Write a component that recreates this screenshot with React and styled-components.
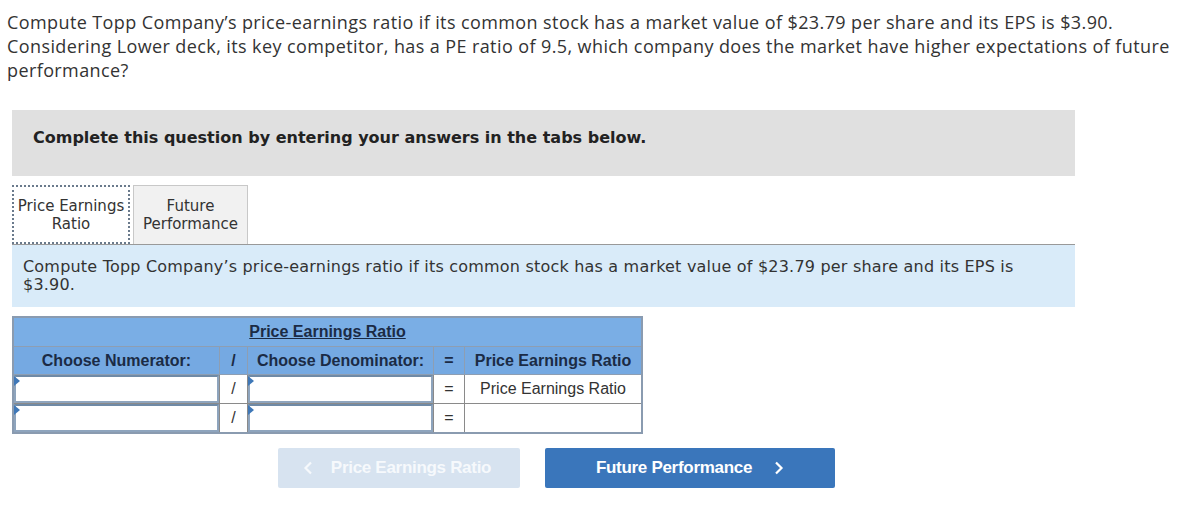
import React from "react";
import styled, { createGlobalStyle } from "styled-components";

const Global = createGlobalStyle`
  html, body { margin: 0; padding: 0; background: #fff; }
`;

const Page = styled.div`
  width: 1180px;
  height: 516px;
  padding: 10px 7px 0 7px;
  box-sizing: border-box;
`;

const Question = styled.p`
  margin: 0;
  font-family: "Open Sans", Lato, sans-serif;
  font-size: 18px;
  line-height: 24px;
  letter-spacing: 0.4px;
  color: #333;
  white-space: nowrap;
`;

const Panel = styled.div`
  margin: 28px 0 0 5px;
  width: 1063px;
`;

const Banner = styled.div`
  height: 66px;
  box-sizing: border-box;
  background: #e0e0e0;
  padding: 18px 0 0 21px;
  line-height: 20px;
  font-family: Verdana, "DejaVu Sans", sans-serif;
  font-weight: bold;
  font-size: 16px;
  color: #222;
`;

const TabBar = styled.div`
  display: flex;
  gap: 3px;
  margin-top: 9px;
  border-bottom: 1px solid #999;
`;

const Tab = styled.div`
  width: ${(p) => p.w}px;
  height: 59px;
  box-sizing: border-box;
  display: flex;
  align-items: center;
  justify-content: center;
  text-align: center;
  font-family: Verdana, "DejaVu Sans", sans-serif;
  font-size: 15px;
  line-height: 18px;
  color: #333;
  background: ${(p) => (p.active ? "#fff" : "#f1f1f1")};
  border: ${(p) => (p.active ? "2px dotted #6a7a8c" : "1px solid #c8c8c8")};
  border-bottom: ${(p) => (p.active ? "2px dotted #6a7a8c" : "none")};
  margin-bottom: ${(p) => (p.active ? "-1px" : "0")};
`;

const Info = styled.div`
  background: #d9ebf9;
  height: 62px;
  box-sizing: border-box;
  padding: 13px 50px 0 11px;
  font-family: Verdana, "DejaVu Sans", sans-serif;
  font-size: 16px;
  letter-spacing: 0.2px;
  line-height: 18px;
  color: #333;
`;

const Table = styled.table`
  margin-top: 9px;
  border-collapse: collapse;
  font-family: Arial, "Liberation Sans", sans-serif;
  font-size: 16px;
  line-height: 18px;
  border: 2px solid #8a9bb0;
`;

const Th = styled.th`
  background: ${(p) => (p.top ? "#7aaee5" : "#75a9e2")};
  color: #1b2b45;
  font-weight: bold;
  height: ${(p) => (p.top ? 28 : 27)}px;
  padding: 0;
  text-align: center;
  border: 1px solid #8e9eb2;
  border-top: ${(p) => (p.top ? "none" : "1px solid #8e9eb2")};
  width: ${(p) => (p.w ? p.w + "px" : "auto")};
  text-decoration: ${(p) => (p.top ? "underline" : "none")};
  white-space: nowrap;
`;

const Td = styled.td`
  height: 27px;
  padding: 0;
  text-align: center;
  border: 1px solid #8a8a8a;
  color: #333;
  background: #fff;
  white-space: nowrap;
`;

const InputTd = styled.td`
  height: 27px;
  padding: 0;
  border: 1px solid #8a8a8a;
  background: #fff;
  position: relative;
`;

const Field = styled.div`
  border: 2px solid #8ea4bd;
  border-top-color: #6f8aa6;
  box-sizing: border-box;
  height: 28px;
  background: #fff;
`;

const Marker = styled.span`
  position: absolute;
  left: 0;
  top: 1px;
  width: 0;
  height: 0;
  border-top: 5px solid transparent;
  border-bottom: 5px solid transparent;
  border-left: 6px solid #3f78b8;
`;

const Nav = styled.div`
  display: flex;
  gap: 25px;
  margin: 14px 0 0 266px;
`;

const NavButton = styled.button`
  height: 40px;
  width: ${(p) => p.w}px;
  border: none;
  border-radius: 2px;
  background: ${(p) => (p.disabled ? "#d7e3f0" : "#3a76bb")};
  color: ${(p) => (p.disabled ? "#f6f9fc" : "#fff")};
  font-family: Arial, "Liberation Sans", sans-serif;
  font-weight: bold;
  font-size: 17px;
  letter-spacing: -0.3px;
  display: flex;
  align-items: center;
  justify-content: center;
  gap: ${(p) => (p.disabled ? 18 : 22)}px;
  padding: 0;
  padding-right: ${(p) => (p.disabled ? "4px" : "0")};
`;

const Chevron = ({ dir }) => (
  <svg width="10" height="14" viewBox="0 0 10 14">
    <path
      d={dir === "left" ? "M8 1.5 L2.5 7 L8 12.5" : "M2 1.5 L7.5 7 L2 12.5"}
      fill="none"
      stroke="currentColor"
      strokeWidth="2.2"
    />
  </svg>
);

const InputRow = ({ result }) => (
  <tr>
    <InputTd>
      <Field />
      <Marker />
    </InputTd>
    <Td>/</Td>
    <InputTd>
      <Field />
      <Marker />
    </InputTd>
    <Td>=</Td>
    <Td>{result}</Td>
  </tr>
);

export default function App() {
  return (
    <Page>
      <Global />
      <Question>
        Compute Topp Company’s price-earnings ratio if its common stock has a market value of
        $23.79 per share and its EPS is $3.90.
        <br />
        Considering Lower deck, its key competitor, has a PE ratio of 9.5, which company does the
        market have higher expectations of future
        <br />
        performance?
      </Question>
      <Panel>
        <Banner>Complete this question by entering your answers in the tabs below.</Banner>
        <TabBar>
          <Tab active w={118}>
            Price Earnings
            <br />
            Ratio
          </Tab>
          <Tab w={115}>
            Future
            <br />
            Performance
          </Tab>
        </TabBar>
        <Info>
          Compute Topp Company’s price-earnings ratio if its common stock has a market value of
          $23.79 per share and its EPS is
          <br />
          $3.90.
        </Info>
        <Table>
          <thead>
            <tr>
              <Th top colSpan={5}>Price Earnings Ratio</Th>
            </tr>
            <tr>
              <Th w={205}>Choose Numerator:</Th>
              <Th w={27}>/</Th>
              <Th w={185}>Choose Denominator:</Th>
              <Th w={30}>=</Th>
              <Th w={176}>Price Earnings Ratio</Th>
            </tr>
          </thead>
          <tbody>
            <InputRow result="Price Earnings Ratio" />
            <InputRow result="" />
          </tbody>
        </Table>
        <Nav>
          <NavButton disabled w={242}>
            <Chevron dir="left" />
            Price Earnings Ratio
          </NavButton>
          <NavButton w={290}>
            Future Performance
            <Chevron dir="right" />
          </NavButton>
        </Nav>
      </Panel>
    </Page>
  );
}
